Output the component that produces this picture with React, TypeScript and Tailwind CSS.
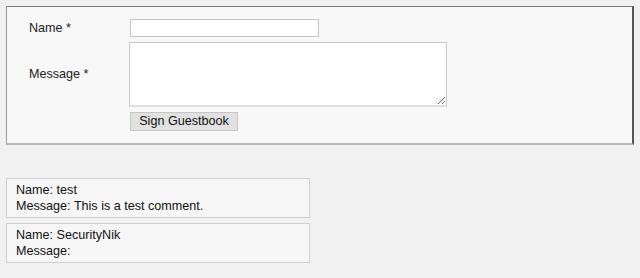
export default function App() {
  const entries = [
    { name: "test", message: "This is a test comment." },
    { name: "SecurityNik", message: "" },
  ];

  return (
    <div className="w-[640px] h-[278px] overflow-hidden bg-[#f1f1f1] pt-[6px] font-['Liberation_Sans',Arial,sans-serif] text-[12.6px] text-[#222]">
      {/* Form box */}
      <div className="mx-[6px] h-[139px] bg-[#f7f8f7] border-t border-t-[#777] border-r-2 border-r-[#555] border-b-2 border-b-[#b8b8b8] border-l border-l-[#999] pl-[22px] pt-[12px]">
        <div className="flex items-center h-[18px]">
          <div className="w-[101px]">Name *</div>
          <input className="w-[189px] h-[18px] bg-white border border-[#c4c4c4] outline-none" />
        </div>
        <div className="flex items-center mt-[5px] h-[65px]">
          <div className="w-[100px]">Message *</div>
          <textarea className="w-[318px] h-[65px] bg-white border border-[#c8c8c8] border-b-2 border-b-[#e0e0e0] outline-none resize" />
        </div>
        <div className="flex mt-[5px]">
          <div className="w-[101px]" />
          <button className="h-[19px] w-[108px] bg-[#e1e1e1] border border-[#c6c6c6] text-[12.6px] leading-none text-[#111]">
            Sign Guestbook
          </button>
        </div>
      </div>

      {/* Entries */}
      <div className="mt-[33px] mx-[6px] flex flex-col gap-[5px]">
        {entries.map((e) => (
          <div
            key={e.name}
            className="w-[304px] h-[40px] bg-[#f6f6f6] border border-[#cfcfcf] px-[9px] pt-[3px] leading-[16px] text-[#111]"
          >
            <div>Name: {e.name}</div>
            <div>Message: {e.message}</div>
          </div>
        ))}
      </div>
    </div>
  );
}
